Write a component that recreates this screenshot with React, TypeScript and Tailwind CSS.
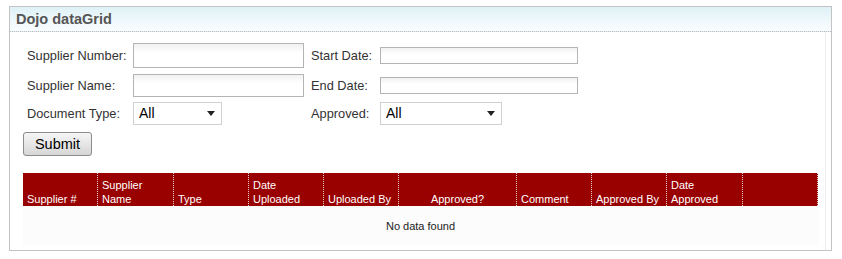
const columns = [
  { label: ["", "Supplier #"], w: "w-[75px]", align: "text-left" },
  { label: ["Supplier", "Name"], w: "w-[76px]", align: "text-left" },
  { label: ["", "Type"], w: "w-[75px]", align: "text-left" },
  { label: ["Date", "Uploaded"], w: "w-[75px]", align: "text-left" },
  { label: ["", "Uploaded By"], w: "w-[75px]", align: "text-left" },
  { label: ["", "Approved?"], w: "w-[118px]", align: "text-center" },
  { label: ["", "Comment"], w: "w-[75px]", align: "text-left" },
  { label: ["", "Approved By"], w: "w-[75px]", align: "text-left" },
  { label: ["Date", "Approved"], w: "w-[76px]", align: "text-left" },
  { label: ["", ""], w: "w-[75px]", align: "text-left" },
];

function TextBox({ className }: { className: string }) {
  return (
    <div
      className={`border border-[#b4b4b4] bg-gradient-to-b from-[#f1f1f1] to-white to-40% ${className}`}
    />
  );
}

function Select({ className }: { className: string }) {
  return (
    <div
      className={`flex items-center justify-between border border-[#d0d0d0] bg-white pl-[5px] pr-[6px] text-[14px] text-black ${className}`}
    >
      <span>All</span>
      <svg width="8" height="5" viewBox="0 0 8 5">
        <path d="M0 0h8L4 5z" fill="#222" />
      </svg>
    </div>
  );
}

export default function App() {
  return (
    <div className="w-[842px] h-[259px] bg-white pt-[6px] pl-[9px] font-['Liberation_Sans',Arial,sans-serif] text-[#333]">
      <div className="w-[823px] h-[245px] border border-[#c3c3c3] flex flex-col">
        <div className="h-[25px] shrink-0 border-b border-dotted border-[#b9b9b9] bg-gradient-to-b from-[#dff1f7] to-[#fafdfe] pl-[6px] flex items-center">
          <span className="text-[14.5px] font-bold text-[#555] leading-none">Dojo dataGrid</span>
        </div>

        <div className="flex-1 mr-[5px] border-r border-[#eeeeee] pl-[13px] pt-[11px]">
          <div className="pl-[4px] text-[12.8px]">
            <div className="flex items-center h-[25px]">
              <span className="w-[106px]">Supplier Number:</span>
              <TextBox className="w-[171px] h-[25px]" />
              <span className="w-[69px] ml-[7px]">Start Date:</span>
              <TextBox className="w-[198px] h-[17px]" />
            </div>
            <div className="flex items-center h-[23px] mt-[6px]">
              <span className="w-[106px]">Supplier Name:</span>
              <TextBox className="w-[171px] h-[23px]" />
              <span className="w-[69px] ml-[7px]">End Date:</span>
              <TextBox className="w-[198px] h-[17px]" />
            </div>
            <div className="flex items-center h-[23px] mt-[5px]">
              <span className="w-[106px]">Document Type:</span>
              <Select className="w-[89px] h-[23px]" />
              <span className="w-[69px] ml-[89px]">Approved:</span>
              <Select className="w-[122px] h-[23px]" />
            </div>
          </div>

          <button className="mt-[7px] w-[69px] h-[24px] rounded-[3px] border border-[#8c8c8c] bg-gradient-to-b from-[#f6f6f6] to-[#d6d6d6] text-[14.5px] text-black leading-none">
            Submit
          </button>

          <div className="mt-[17px] w-[795px]">
            <div className="flex h-[33px] bg-[#990000]">
              {columns.map((c, i) => (
                <div
                  key={i}
                  className={`${c.w} ${c.align} h-full border-r border-dotted border-white/80 px-[4px] flex flex-col justify-end text-[11px] leading-[14px] text-white`}
                >
                  {c.label[0] && <span>{c.label[0]}</span>}
                  <span className="whitespace-nowrap">{c.label[1]}</span>
                </div>
              ))}
            </div>
            <div className="h-[40px] bg-[#fcfcfc] flex items-center justify-center text-[11px] text-[#222]">
              No data found
            </div>
          </div>
        </div>
      </div>
    </div>
  );
}
